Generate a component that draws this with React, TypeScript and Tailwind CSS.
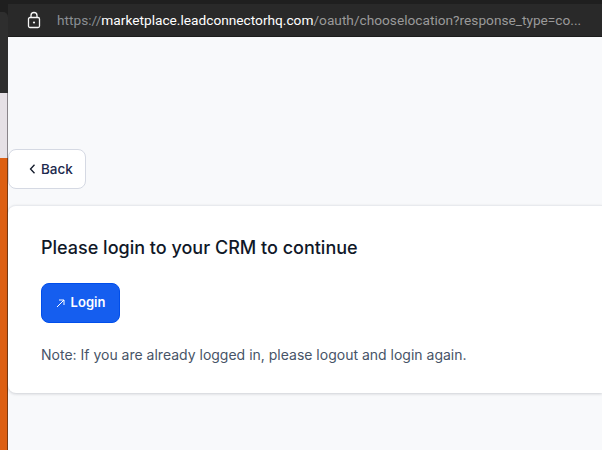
export default function App() {
  return (
    <div className="w-[602px] h-[450px] overflow-hidden flex bg-[#272727] font-['Inter',sans-serif]">
      <div className="w-[8px] shrink-0 flex flex-col bg-[#1f1f1f]">
        <div className="h-[12px]" />
        <div className="h-[81px] bg-[#2e2e2e] rounded-tr-[5px]" />
        <div className="h-[65px] bg-[#e6e1e6] border-r border-[#8a858a]" />
        <div className="flex-1 bg-[#dd5f12] border-r border-[#7a3a12]" />
      </div>
      <div className="flex-1 min-w-0 flex flex-col">
        <div className="h-[4px] bg-[#1f1f1f]" />
        <div className="h-[33px] flex items-center bg-[#292929] border-b border-[#1c1c1c]">
          <svg className="ml-[19px] mr-[16px] shrink-0" width="14" height="18" viewBox="0 0 14 18" fill="none">
            <rect x="1.5" y="6.5" width="11" height="10" rx="1.5" stroke="#f5f5f5" strokeWidth="1.3" />
            <path d="M4 6.5V4.5a3 3 0 0 1 6 0v2" stroke="#f5f5f5" strokeWidth="1.3" />
            <circle cx="7" cy="11.5" r="1.1" fill="#f5f5f5" />
          </svg>
          <div className="text-[13.7px] whitespace-nowrap text-[#9a9a9a] font-['Roboto',sans-serif]">
            <span className="text-[#8a8f94]">https://</span>
            <span className="text-white">marketplace.leadconnectorhq.com</span>
            <span>/oauth/chooselocation?response_type=co...</span>
          </div>
        </div>
        <div className="flex-1 bg-[#f8f9fb] flex flex-col">
          <button className="mt-[112px] w-[78px] h-[40px] bg-white border border-[#d5d9e3] rounded-lg flex items-center justify-start pl-[20px] gap-[5px] text-[13.5px] font-medium text-[#1d2a4d]">
            <svg width="7" height="10" viewBox="0 0 7 10" fill="none">
              <path d="M5.5 .8 1.5 5l4 4.2" stroke="#101828" strokeWidth="1.3" />
            </svg>
            Back
          </button>
          <div className="mt-[16px] h-[188px] bg-white rounded-l-lg border-t border-[#e8eaee] shadow-[0_1px_3px_rgba(16,24,40,0.18)] pl-[33px] pt-[31px] flex flex-col items-start">
            <h2 className="text-[18px] leading-[22px] font-medium text-[#101828]">Please login to your CRM to continue</h2>
            <button className="mt-[24px] w-[79px] h-[40px] bg-[#155eef] border border-[#004eeb] rounded-lg flex items-center justify-center gap-[6px] text-white text-[13px] font-semibold">
              <svg width="9" height="9" viewBox="0 0 9 9" fill="none">
                <path d="M1 8 8 1M3 1h5v5" stroke="white" strokeWidth="1" />
              </svg>
              Login
            </button>
            <p className="mt-[22px] text-[14px] leading-[20px] text-[#475467]">Note: If you are already logged in, please logout and login again.</p>
          </div>
        </div>
      </div>
    </div>
  );
}
